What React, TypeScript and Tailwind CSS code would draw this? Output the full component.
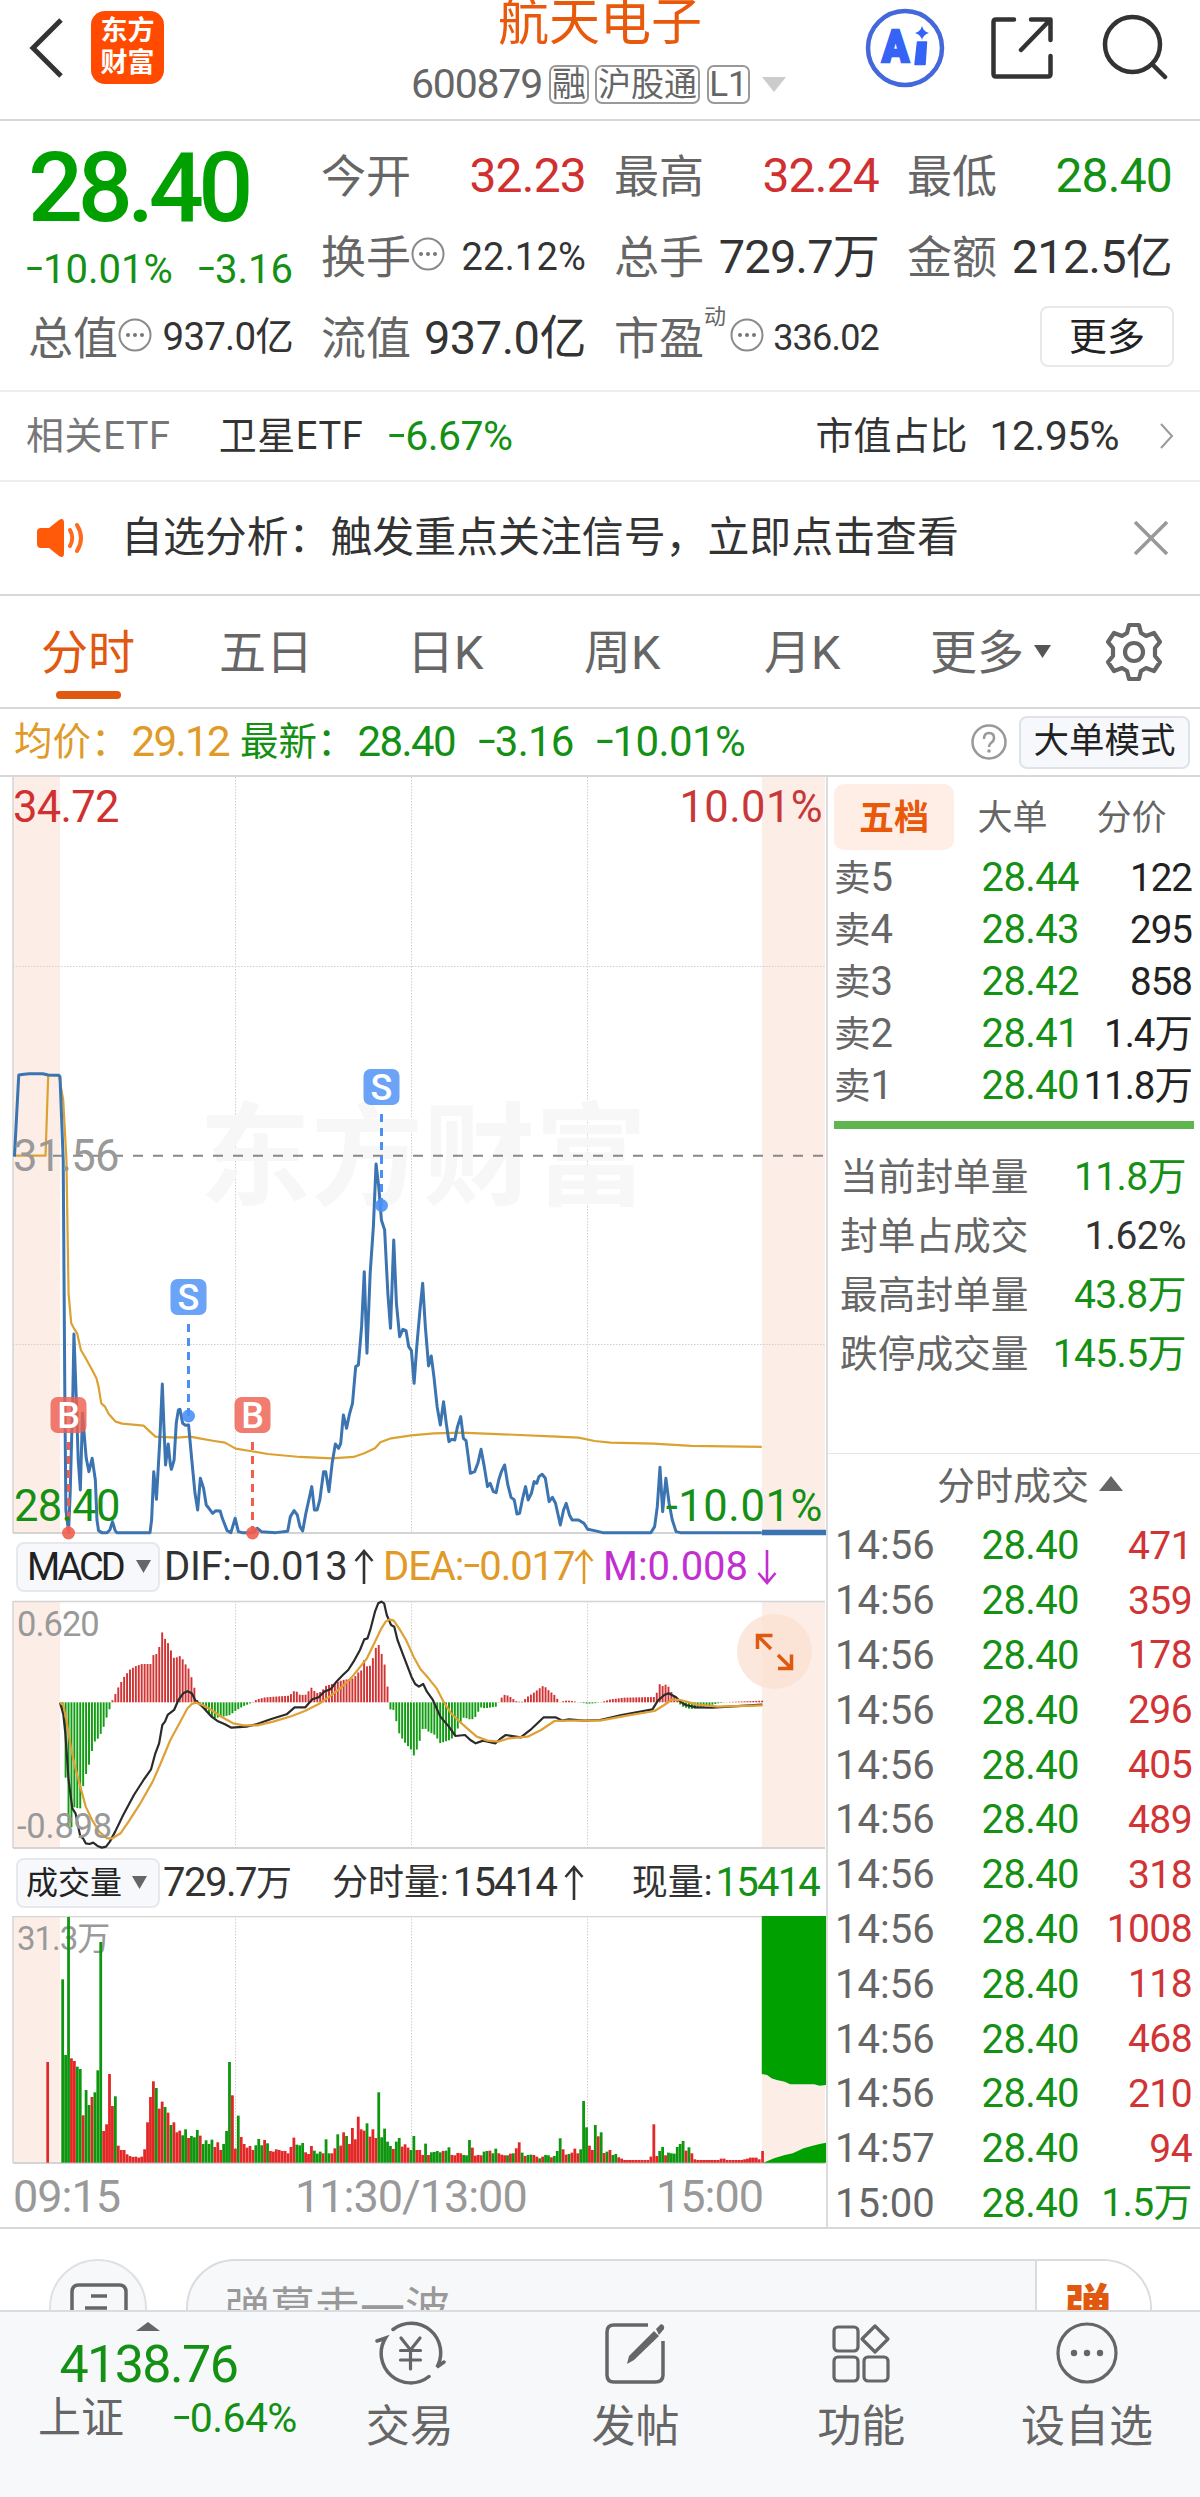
import React from 'react';

const PRICE =
  '27,-10 35,-255 45,-257 55,-259 80,-259 90,-255 110,-254 112,-250 118,0 121,700 123,1050 128,1115 131,1000 136,700 138,522 142,700 146,900 150,990 154,760 158,840 161,895 166,935 172,895 178,960 181,1080 184,1112 190,1118 200,1118 205,1110 210,1085 215,1112 218,1118 280,1118 283,1080 287,935 292,1018 298,850 303,672 306,800 309,915 314,852 318,915 320,928 325,900 329,790 333,750 336,748 341,790 346,796 352,795 358,900 364,1000 369,1050 374,955 380,985 385,1035 390,1045 397,1060 403,1052 411,1053 415,1075 424,1112 431,1118 439,1075 445,1115 452,1118 473,1118 480,1105 488,1115 515,1118 537,1114 542,1070 549,1052 555,1065 560,1100 565,1113 571,1060 582,980 587,1050 592,1050 597,1020 604,935 608,935 614,995 620,910 626,852 632,865 636,850 641,765 647,805 652,765 658,730 664,620 669,615 675,500 680,335 685,580 691,340 697,200 702,12 707,80 712,180 718,210 724,400 729,505 735,240 740,430 746,530 752,508 758,512 763,560 768,572 773,670 778,560 784,450 789,370 794,500 800,618 805,588 810,650 816,740 822,795 828,725 833,790 838,845 843,838 849,840 854,800 860,770 865,835 870,842 874,890 878,940 886,935 892,910 898,868 904,920 910,980 915,970 921,995 926,998 931,960 936,935 942,915 948,975 954,1012 960,1020 965,1062 970,1060 975,1020 981,980 986,1020 992,1000 997,965 1002,970 1006,950 1012,943 1018,955 1025,1025 1031,1012 1037,1030 1046,1095 1052,1050 1057,1030 1063,1065 1068,1080 1080,1080 1090,1090 1097,1108 1110,1112 1125,1118 1215,1118 1222,1100 1227,1040 1232,922 1237,1055 1243,955 1249,1030 1255,1080 1262,1115 1270,1118 1422,1118';

const AVG =
  '27,-13 85,-13 90,-254 110,-254 118,-180 124,0 128,400 133,490 138,505 144,520 151,570 160,595 172,630 180,655 184,680 189,730 196,740 203,762 216,785 228,791 268,797 280,815 290,830 330,833 355,830 375,836 400,843 420,848 440,866 500,882 560,891 620,895 660,891 680,880 700,865 710,847 730,835 768,826 810,820 860,818 940,823 1030,829 1080,833 1110,843 1140,848 1220,851 1290,858 1422,861';

const DIF =
  '112,368 118,400 122,460 128,600 135,685 141,700 146,740 150,770 155,775 160,790 167,792 174,788 182,798 190,803 198,800 205,785 215,755 230,705 250,645 268,600 282,568 290,520 297,490 303,435 308,425 313,405 325,390 333,360 342,340 350,334 358,340 365,362 378,380 395,410 407,424 420,433 432,443 460,440 480,432 505,418 535,403 550,382 570,382 583,358 595,352 605,335 617,328 628,305 640,285 650,270 660,245 672,210 680,178 686,175 692,145 700,95 706,70 712,65 717,70 722,105 730,135 736,140 742,180 755,235 768,290 775,312 782,320 790,312 797,335 808,360 822,410 838,440 850,468 868,465 878,480 888,490 902,482 925,490 935,475 944,465 972,472 990,450 1015,412 1037,412 1050,422 1062,418 1090,422 1120,420 1160,405 1218,388 1228,362 1240,345 1248,340 1262,352 1270,365 1280,375 1300,382 1330,383 1423,374';

const DEA =
  '112,368 118,375 124,420 132,500 140,560 150,620 160,680 172,720 185,755 200,775 210,775 225,760 240,725 262,670 285,605 300,550 318,480 335,430 350,385 358,372 366,368 378,375 395,390 415,412 435,430 455,436 480,436 510,425 545,408 570,392 595,372 615,350 635,325 655,295 670,265 685,235 700,185 712,145 720,125 727,118 735,122 745,145 758,180 772,230 785,268 800,295 815,325 828,365 842,400 858,425 872,445 890,470 910,482 930,485 950,475 985,470 1010,450 1035,423 1060,422 1120,422 1170,407 1222,393 1240,375 1255,358 1270,360 1300,373 1340,380 1423,376';

const HIST =
  '112,367 117,400 123,612 128,740 134,742 139,680 145,685 150,685 155,620 161,580 167,550 172,510 178,480 184,475 190,455 196,430 202,395 207,380 210,360 216,340 222,318 232,290 243,268 254,258 265,252 281,252 287,222 292,222 298,198 303,155 309,180 314,190 320,215 325,235 330,232 336,228 342,240 347,255 353,268 358,295 364,330 369,365 375,370 386,395 397,415 410,412 430,405 440,392 455,378 470,368 480,358 495,352 540,347 551,330 560,345 570,345 582,322 590,340 600,335 608,318 620,312 640,300 660,295 670,275 676,270 681,230 686,265 692,255 697,230 703,195 708,195 713,225 719,260 724,328 728,388 735,390 740,425 746,465 757,490 768,510 773,528 779,505 784,480 790,440 800,455 812,465 822,490 830,485 840,480 848,470 860,425 866,412 880,420 888,410 897,382 905,385 926,380 935,355 943,343 952,350 965,365 975,365 985,350 995,340 1003,330 1015,316 1022,328 1035,345 1045,367 1055,362 1065,362 1080,367 1097,371 1110,370 1123,366 1140,358 1165,353 1222,351 1227,335 1232,310 1238,320 1244,312 1250,325 1256,345 1262,355 1267,370 1275,380 1288,387 1300,386 1320,378 1340,370 1360,366 1390,364 1423,362';

// one bar per minute from 09:30, letter = direction, number = top of the bar
const VOL =
  'g358 g585 g171 r595 r603 g620 g627 r766 g690 g735 r711 g697 g631 g246 r813 r793 r642 r738 g709 r857 r870 r870 r883 r888 r891 r890 r893 r890 r868 r787 r711 r664 g684 r746 r725 g741 r758 g795 r787 r817 r812 g826 g808 r834 g828 g832 g810 r827 g852 g841 g852 g839 r861 r847 r870 g852 g813 g606 r706 r866 g767 r831 r852 r863 r858 r870 g856 g837 g856 r840 g850 r873 r875 r868 r870 r873 r873 r880 r861 r833 g854 g856 g849 r877 r882 r858 g872 g881 g875 r880 g838 g880 r880 r865 g823 r857 r817 g828 r852 r804 r838 r770 r808 r812 g790 r830 r808 r834 g697 g832 g806 g845 g858 r867 g845 g834 r860 r853 r863 g870 g828 r870 r870 r885 g851 r885 g877 g876 g873 g877 r873 g872 g862 r885 r886 r879 r880 g885 g886 g840 r863 r887 r885 r886 g875 g873 r872 g880 g866 r880 r884 r886 g886 r881 g880 r865 r847 g878 r888 g885 g884 r885 r890 g895 r890 g885 g886 r892 g888 g873 g835 r868 r884 g882 r878 r866 r880 g868 g723 g802 r857 r870 g795 r829 g817 r879 g875 r870 g885 g882 r892 r896 r900 r900 r900 r900 r900 r900 r900 r900 r900 r890 r793 r888 g873 g861 r886 g878 g880 g881 g861 g852 g843 r872 g862 r880 r898 r900 r900 r900 r900 r900 r900 r900 r900 r896 r896 r900 r900 r900 r900 r900 r900 r898 r896 r893 r893 r893 r898';

const STEP = 5.463;

const parse = (s: string) => s.split(' ').map(p => p.split(',').map(Number));

const histPts = parse(HIST);
function histAt(x: number) {
  for (let i = 1; i < histPts.length; i++) {
    const [x0, y0] = histPts[i - 1];
    const [x1, y1] = histPts[i];
    if (x <= x1) return y0 + ((y1 - y0) * (x - x0)) / (x1 - x0);
  }
  return 367;
}
const histBars = Array.from({ length: 240 }, (_, i) => {
  const x = 117 + i * STEP;
  return { x, y: histAt(x) };
});

const volBars = VOL.split(' ').map((v, i) => ({
  x: 117 + i * STEP,
  up: v[0] === 'r',
  y: Number(v.slice(1)),
}));

const ASKS = [
  ['卖5', '28.44', '122'],
  ['卖4', '28.43', '295'],
  ['卖3', '28.42', '858'],
  ['卖2', '28.41', '1.4万'],
  ['卖1', '28.40', '11.8万'],
];

const STATS = [
  { label: '当前封单量', value: '11.8万', green: true },
  { label: '封单占成交', value: '1.62%', green: false },
  { label: '最高封单量', value: '43.8万', green: true },
  { label: '跌停成交量', value: '145.5万', green: true },
];

const TRADES = [
  ['14:56', '471'], ['14:56', '359'], ['14:56', '178'], ['14:56', '296'],
  ['14:56', '405'], ['14:56', '489'], ['14:56', '318'], ['14:56', '1008'],
  ['14:56', '118'], ['14:56', '468'], ['14:56', '210'], ['14:57', '94'],
  ['15:00', '1.5万'],
];

// wide minus sign
function Neg() {
  return <span className="inline-block scale-x-150 -translate-y-[2px] mx-[3px]">-</span>;
}

function Dots() {
  return (
    <svg width="34" height="34" viewBox="0 0 34 34" fill="none" className="flex-shrink-0 -mt-[5px]">
      <circle cx="17" cy="17" r="15.5" stroke="#8a8a8a" strokeWidth="2" />
      <circle cx="10" cy="17" r="2" fill="#777" />
      <circle cx="17" cy="17" r="2" fill="#777" />
      <circle cx="24" cy="17" r="2" fill="#777" />
    </svg>
  );
}

function Arrow({ down = false }: { down?: boolean }) {
  return (
    <svg width="20" height="36" viewBox="0 0 20 36" fill="none" stroke="currentColor" strokeWidth="2.6"
      className={down ? 'rotate-180' : ''}>
      <path d="M10 35V2M1.5 12L10 2l8.5 10" />
    </svg>
  );
}

function Header() {
  return (
    <header className="h-[121px] border-b-2 border-[#d8d8d8] flex justify-between overflow-hidden">
      <div className="flex pl-[28px] pt-[11px] w-[400px]">
        <svg width="36" height="74" viewBox="0 0 36 74" fill="none" stroke="#333" strokeWidth="5">
          <path d="M33 9L5 37l28 28" />
        </svg>
        <div className="ml-[27px] w-[73px] h-[73px] rounded-[14px] bg-[#ff4a00] text-white font-bold text-[27px] leading-[32px] text-center pt-[4px]">
          <div>东方</div>
          <div>财富</div>
        </div>
      </div>
      <div className="w-[400px] flex flex-col items-center">
        <div className="text-[51px] leading-[46px] text-[#e8590c]">航天电子</div>
        <div className="mt-[17px] h-[42px] flex items-center text-[#666] leading-none -ml-[3px]">
          <span className="text-[41px] tracking-[-1.2px]">600879</span>
          <span className="ml-[7px] h-[39px] w-[40px] flex items-center justify-center rounded-[7px] border-2 border-[#999] text-[34px]">融</span>
          <span className="ml-[6px] h-[39px] w-[105px] flex items-center justify-center rounded-[7px] border-2 border-[#999] text-[33px]">沪股通</span>
          <span className="ml-[7px] h-[39px] w-[43px] flex items-center justify-center rounded-[7px] border-2 border-[#999] text-[35px]">L1</span>
          <svg width="24" height="15" viewBox="0 0 24 15" className="ml-[12px]"><path d="M0 0h24L12 15z" fill="#ccc" /></svg>
        </div>
      </div>
      <div className="w-[400px] flex justify-end pr-[32px] pt-[8px]">
        <svg width="80" height="80" viewBox="0 0 80 80" className="mr-[45px]">
          <circle cx="40" cy="40" r="37" fill="none" stroke="#4468dc" strokeWidth="4.500" />
          <text x="17" y="54" fontSize="44" fontWeight="900" fill="#3563f5" stroke="#3563f5" strokeWidth="2.500" textLength="27" lengthAdjust="spacingAndGlyphs">A</text>
          <path d="M52.500 34h9L60 56.500h-10z" fill="#3563f5" stroke="#3563f5" strokeWidth="1.500" strokeLinejoin="round" />
          <path d="M57 18q1.500 5.500 7 7-5.500 1.500-7 7-1.500-5.500-7-7 5.500-1.500 7-7z" fill="#3563f5" />
        </svg>
        <svg width="64" height="80" viewBox="0 0 64 80" fill="none" stroke="#333" strokeWidth="4.500" strokeLinejoin="round" strokeLinecap="round" className="mr-[48px]">
          <path d="M24 11.500H6q-2.500 0-2.500 2.500v52q0 2.500 2.500 2.500h52q2.500 0 2.500-2.500V48M41 11.500h19.500V32M60 12L31 42" />
        </svg>
        <svg width="66" height="80" viewBox="0 0 66 80" fill="none" stroke="#333" strokeWidth="4.500" strokeLinecap="round">
          <circle cx="30.500" cy="36.500" r="27.500" />
          <path d="M50 56l13 13" />
        </svg>
      </div>
    </header>
  );
}

function Quote() {
  const cell = 'flex items-center justify-between';
  const label = 'text-[45px] text-[#666] relative top-[2px]';
  return (
    <section className="h-[271px] border-b-2 border-[#eee] px-7 pt-[14px] leading-none text-[#333]">
      <div className="grid grid-cols-4 grid-rows-[81px_81px_81px] gap-x-7">
        <div className="flex items-center pt-[26px] text-[97px] font-medium text-[#00a000] tracking-[-5.5px]">28.40</div>
        <div className={cell}><span className={label}>今开</span><span className="text-[48px] tracking-[-0.8px] text-[#d03030]">32.23</span></div>
        <div className={cell}><span className={label}>最高</span><span className="text-[48px] tracking-[-0.8px] text-[#d03030]">32.24</span></div>
        <div className={cell}><span className={label}>最低</span><span className="text-[48px] tracking-[-0.8px] text-[#149014]">28.40</span></div>

        <div className={`${cell} pt-[26px] text-[40px] text-[#149014]`}><span className="-ml-[2px]"><Neg />10.01%</span><span><Neg />3.16</span></div>
        <div className={cell}>
          <span className="flex items-center"><span className={label}>换手</span><Dots /></span>
          <span className="text-[38px] tracking-[0.2px]">22.12%</span>
        </div>
        <div className={cell}><span className={label}>总手</span><span className="text-[47px] tracking-[-0.8px]">729.7万</span></div>
        <div className={cell}><span className={label}>金额</span><span className="text-[47px] tracking-[-0.8px]">212.5亿</span></div>

        <div className={cell}>
          <span className="flex items-center"><span className={label}>总值</span><Dots /></span>
          <span className="text-[38.5px] tracking-[-0.8px]">937.0亿</span>
        </div>
        <div className={cell}><span className={label}>流值</span><span className="text-[47px] tracking-[-0.5px]">937.0亿</span></div>
        <div className={cell}>
          <span className="flex items-center">
            <span className={label}>市盈</span>
            <span className="text-[22px] text-[#666] self-start -mt-[9px]">动</span>
            <span className="ml-[4px]"><Dots /></span>
          </span>
          <span className="text-[36px] tracking-[-0.8px]">336.02</span>
        </div>
        <div className="flex items-center justify-end">
          <span className="-mr-[2px] -mt-[2px] w-[134px] h-[61px] rounded-[8px] border-2 border-[#e8e8e8] flex items-center justify-center text-[38px] text-[#222]">更多</span>
        </div>
      </div>
    </section>
  );
}

function EtfRow() {
  return (
    <section className="h-[90px] border-b-2 border-[#eee] flex items-center pl-[26px] pr-[26px] leading-none text-[38px] text-[#333]">
      <span className="text-[#777] tracking-[0.6px]">相关ETF</span>
      <span className="ml-[48px] tracking-[0.6px]">卫星ETF</span>
      <span className="ml-[25px] text-[41px] tracking-[-0.5px] text-[#149014]"><Neg />6.67%</span>
      <span className="ml-auto">市值占比</span>
      <span className="ml-[22px] text-[41px] tracking-[-0.6px]">12.95%</span>
      <svg width="14" height="26" viewBox="0 0 14 26" fill="none" stroke="#999" strokeWidth="2" className="ml-[41px]"><path d="M1 1l11 12L1 25" /></svg>
    </section>
  );
}

function Notice() {
  return (
    <section className="h-[114px] border-b-2 border-[#d8d8d8] flex items-center pl-[36px] pr-[32px] leading-none">
      <svg width="50" height="40" viewBox="0 0 50 40">
        <path d="M1 14q0-4 4-4h8L23 2q5-3 5 3v30q0 6-5 3l-10-8H5q-4 0-4-4z" fill="#ff5a0a" />
        <path d="M34 12q4.500 8 0 16M41 7q8 13 0 26" fill="none" stroke="#ff6a20" strokeWidth="4" strokeLinecap="round" />
      </svg>
      <span className="ml-[35px] text-[41.900px] text-[#333]">自选分析：触发重点关注信号，立即点击查看</span>
      <svg width="34" height="34" viewBox="0 0 34 34" stroke="#999" strokeWidth="3.500" className="ml-auto"><path d="M1 1l32 32M33 1L1 33" /></svg>
    </section>
  );
}

function Tabs() {
  return (
    <nav className="h-[113px] border-b-2 border-[#d8d8d8] flex leading-[114px] text-[47px] text-[#666]">
      <div className="ml-[41px] w-[178px] flex flex-col text-[#e0590f]">
        <span className="h-[95px]">分时</span>
        <span className="ml-[15px] w-[65px] h-[8px] rounded-full bg-[#e0590f]"></span>
      </div>
      <span className="w-[188px]">五日</span>
      <span className="w-[177px]">日K</span>
      <span className="w-[180px]">周K</span>
      <span className="w-[166px]">月K</span>
      <span className="w-[104px]">更多</span>
      <svg width="17" height="13" viewBox="0 0 17 13" className="mt-[49px]"><path d="M0 0h17L8.500 13z" fill="#555" /></svg>
      <svg width="60" height="60" viewBox="0 0 60 60" fill="none" stroke="#666" strokeWidth="4.200" strokeLinejoin="round" className="ml-[53px] mt-[26px]">
        <path d="M25 3h10l2 8 5 3 8-3 6 9-5 6v8l5 6-6 9-8-3-5 3-2 8H25l-2-8-5-3-8 3-6-9 5-6v-8l-5-6 6-9 8 3 5-3z" />
        <circle cx="30" cy="30" r="9" />
      </svg>
    </nav>
  );
}

function InfoRow() {
  return (
    <section className="h-[68px] border-b-2 border-[#d8d8d8] flex items-center pl-[14px] pr-[10px] leading-none text-[42px] text-[#149014]">
      <span className="text-[38.5px] text-[#e09a28]">均价：</span>
      <span className="ml-[2px] text-[#e09a28] tracking-[-1.6px]">29.12</span>
      <span className="ml-[11px] text-[38.5px]">最新：</span>
      <span className="ml-[2px] tracking-[-1.6px]">28.40</span>
      <span className="ml-[23px] tracking-[-0.8px]"><Neg />3.16</span>
      <span className="ml-[22px] tracking-[-0.6px]"><Neg />10.01%</span>
      <svg width="36" height="36" viewBox="0 0 36 36" className="ml-auto">
        <circle cx="18" cy="18" r="16.500" fill="none" stroke="#999" strokeWidth="2.500" />
        <path d="M13 15q0-6 5-6t5 5q0 3-3 5-2 1.500-2 4" fill="none" stroke="#999" strokeWidth="2.500" />
        <circle cx="18" cy="27" r="1.800" fill="#999" />
      </svg>
      <span className="ml-[12px] w-[171px] h-[53px] rounded-[8px] border-2 border-[#dfe2e8] bg-[#f7f8fb] flex items-center justify-center text-[35.5px] text-[#222]">大单模式</span>
    </section>
  );
}

interface MarkProps {
  kind: 'S' | 'B';
  x:    number;
  top:  number;
  dot:  number;
}

function Mark({ kind, x, top, dot }: MarkProps) {
  const c = kind === 'S' ? '#4a90f5' : '#ee5f50';
  return (
    <g>
      <path d={`M${x} ${top + 45}V${dot}`} stroke={c} strokeWidth="3" strokeDasharray="8 6" />
      <circle cx={x} cy={dot} r="6.500" fill={c} opacity="0.9" />
      <rect x={x - 18} y={top} width="36" height="36" rx="7" fill={c} opacity="0.82" />
      <text x={x} y={top + 30.5} fontSize="36" fontWeight="500" fill="#fff" textAnchor="middle">{kind}</text>
    </g>
  );
}

function Grid({ top, bottom }: { top: number; bottom: number }) {
  return (
    <g>
      <rect x="13" y={top} width="47" height={bottom - top} fill="#fceee7" />
      <rect x="762" y={top} width="63" height={bottom - top} fill="#fceee7" />
      {[235.5, 411.5, 587.5].map(x => (
        <path key={x} d={`M${x} ${top}V${bottom}`} stroke="#d0d0d0" strokeDasharray="1.5 1.5" />
      ))}
      <path d={`M13 ${top}V${bottom}`} stroke="#d4d4d4" strokeWidth="1.500" />
      <path d={`M13 ${bottom}H825`} stroke="#d4d4d4" strokeWidth="2" />
    </g>
  );
}

function PriceChart() {
  return (
    <svg width="826" height="763" viewBox="0 777 826 763" className="block" fill="none">
      <Grid top={777} bottom={1533} />
      <path d="M13 966.500H825M13 1344.500H825" stroke="#d0d0d0" strokeDasharray="1.5 1.5" />
      <text x="199" y="1197" fontSize="112" fontWeight="700" fill="#f7f7f7">东方财富</text>
      <path d="M53 1155.700H825" stroke="#888" strokeWidth="2" strokeDasharray="10 10" />
      <g transform="translate(0 1160) scale(0.5357 0.3333)" strokeLinejoin="round">
        <polyline points={AVG} stroke="#dba232" strokeWidth="2.200" vectorEffect="non-scaling-stroke" />
        <polyline points={PRICE} stroke="#3b74b0" strokeWidth="3" vectorEffect="non-scaling-stroke" />
      </g>
      <path d="M762 1532.500H826" stroke="#3b74b0" strokeWidth="5.500" />
      <Mark kind="S" x={381.5} top={1069} dot={1205.5} />
      <Mark kind="S" x={188.5} top={1279} dot={1416} />
      <Mark kind="B" x={68.5} top={1397} dot={1533} />
      <Mark kind="B" x={252.5} top={1397} dot={1533} />
      <g fontSize="43.500" letterSpacing="-0.700">
        <text x="13" y="822" fill="#d03030">34.72</text>
        <text x="823" y="822" fill="#c83838" textAnchor="end" letterSpacing="0.400">10.01%</text>
        <text x="13" y="1171" fill="#999">31.56</text>
        <text x="14" y="1521" fill="#149014">28.40</text>
        <text x="823" y="1521" fill="#149014" textAnchor="end" letterSpacing="0.600">-10.01%</text>
      </g>
    </svg>
  );
}

function MacdRow() {
  return (
    <div className="h-[53px] flex items-center pl-[16px] leading-none text-[40px] text-[#333]">
      <span className="w-[144px] h-[50px] rounded-[8px] border-2 border-[#e6e8ec] bg-[#f7f8fb] flex items-center pl-[9px] gap-[13px] text-[38px] tracking-[-3px] text-[#222]">
        MACD
        <svg width="15" height="13" viewBox="0 0 15 13"><path d="M0 0h15L7.500 13z" fill="#666" /></svg>
      </span>
      <span className="ml-[4px] w-[190px] tracking-[-0.3px]">DIF:<Neg />0.013</span>
      <Arrow />
      <span className="ml-[9px] w-[191px] tracking-[-1.1px] text-[#e09a28]">DEA:<Neg />0.017</span>
      <span className="text-[#e09a28]"><Arrow /></span>
      <span className="ml-[9px] w-[154px] text-[#c22fd0]">M:0.008</span>
      <span className="text-[#c22fd0]"><Arrow down /></span>
    </div>
  );
}

function MacdChart() {
  return (
    <svg width="826" height="256" viewBox="0 1593 826 256" className="block" fill="none">
      <Grid top={1601} bottom={1848} />
      <path d="M13 1601.500H825" stroke="#d4d4d4" strokeWidth="1.500" />
      <g transform="translate(0 1580) scale(0.5357 0.3333)" strokeLinejoin="round">
        {histBars.map(b => (
          <rect key={b.x} x={b.x - 1.8} y={Math.min(b.y, 367)} width="3.6" height={Math.abs(b.y - 367)}
            fill={b.y < 367 ? '#d03434' : '#119c11'} />
        ))}
        <polyline points={DIF} stroke="#2b2b2b" strokeWidth="2.200" vectorEffect="non-scaling-stroke" />
        <polyline points={DEA} stroke="#dfa035" strokeWidth="2.200" vectorEffect="non-scaling-stroke" />
      </g>
      <circle cx="774.500" cy="1651.500" r="37.500" fill="#fbdfd0" opacity="0.75" />
      <path d="M757.500 1649V1635.500h15M758 1636l13 13M778 1668.500h13.500v-14M791 1668l-13-13" stroke="#e0590f" strokeWidth="3.500" />
      <g fontSize="34.500" fill="#999" letterSpacing="-1">
        <text x="17" y="1636">0.620</text>
        <text x="17" y="1838" letterSpacing="-0.200">-0.898</text>
      </g>
    </svg>
  );
}

function VolRow() {
  return (
    <div className="h-[67px] flex items-center pl-[16px] leading-none text-[40px] text-[#333]">
      <span className="w-[144px] h-[50px] rounded-[8px] border-2 border-[#e6e8ec] bg-[#f7f8fb] flex items-center pl-[8px] gap-[10px] text-[32px] text-[#222]">
        成交量
        <svg width="15" height="13" viewBox="0 0 15 13"><path d="M0 0h15L7.500 13z" fill="#666" /></svg>
      </span>
      <span className="ml-[3px] w-[169px] tracking-[-1.5px]"><span>729.7</span><span className="text-[36px]">万</span></span>
      <span className="text-[36px]">分时量:</span>
      <span className="ml-[4px] w-[111px] tracking-[-1.8px]">15414</span>
      <Arrow />
      <span className="ml-auto text-[36px]">现量:</span>
      <span className="ml-[3px] mr-[7px] tracking-[-1.8px] text-[#149014]">15414</span>
    </div>
  );
}

function VolChart() {
  return (
    <svg width="826" height="249" viewBox="0 1916 826 249" className="block" fill="none">
      <Grid top={1916} bottom={2163} />
      <path d="M13 1916.500H825" stroke="#d4d4d4" strokeWidth="1.500" />
      <text x="17" y="1950" fontSize="33" fill="#999" letterSpacing="-1">31.3万</text>
      <g transform="translate(0 1860) scale(0.5357 0.3333)">
        <rect x="86.500" y="606" width="5" height="302" fill="#e02828" />
        {volBars.map(b => (
          <rect key={b.x} x={b.x - 2.6} y={b.y} width="5.2" height={908 - b.y} fill={b.up ? '#e32626' : '#0f960f'} />
        ))}
        <rect x="1421" y="873" width="5" height="35" fill="#e02828" />
        <path d="M1422 168H1542V675L1530 677 1520 673H1475L1465 665 1450 660 1440 655 1432 645 1422 642z" fill="#00a000" />
        <path d="M1425 908L1445 895 1465 885 1480 880 1500 865 1515 858 1530 852 1542 848V908z" fill="#00a000" />
      </g>
    </svg>
  );
}

function OrderBook() {
  return (
    <aside className="w-[374px] border-l-2 border-[#dcdcdc] leading-none text-[#222]">
      <div className="h-[677px] border-b border-[#e4e4e4]">
        <div className="flex pl-[6px] pt-[7px] text-[35px] text-[#666]">
          <span className="w-[120px] h-[66px] rounded-[10px] bg-[#ffeee6] flex items-center justify-center font-bold text-[#e8590c] pt-[3px]">五档</span>
          <span className="w-[117px] h-[66px] flex items-center justify-center pt-[3px]">大单</span>
          <span className="w-[121px] h-[66px] flex items-center justify-center pt-[3px]">分价</span>
        </div>
        {ASKS.map(([name, price, qty]) => (
          <div key={name} className="h-[52px] pt-[4px] flex items-center pl-[6px] pr-[8px]">
            <span className="w-[90px] text-[#666] text-[40px]"><span className="text-[36.500px]">{name[0]}</span>{name[1]}</span>
            <span className="w-[155px] text-right text-[40px] text-[#149014] tracking-[-0.6px]">{price}</span>
            <span className={`flex-1 text-right tracking-[-1px] ${qty.length > 5 ? 'text-[35.5px]' : 'text-[38.5px]'}`}>{qty}</span>
          </div>
        ))}
        <div className="ml-[6px] mr-[6px] mt-[11px] h-[8px] bg-[#60b64e]"></div>
        <div className="pt-[17px]">
          {STATS.map(s => (
            <div key={s.label} className="h-[59px] pt-[4px] flex items-center justify-between pl-[12px] pr-[14px]">
              <span className="text-[37.700px] text-[#666]">{s.label}</span>
              <span className={`text-[39px] tracking-[-0.6px] ${s.green ? 'text-[#149014]' : 'text-[#333]'}`}>{s.value}</span>
            </div>
          ))}
        </div>
      </div>
      <div className="h-[63px] flex items-center justify-center text-[38px] text-[#666] pl-[32px]">
        分时成交
        <svg width="24" height="15" viewBox="0 0 24 15" className="ml-[10px] -mt-[4px]"><path d="M0 15h24L12 0z" fill="#666" /></svg>
      </div>
      {TRADES.map(([time, qty], i) => (
        <div key={i} className="h-[54.800px] pt-[4px] flex items-center pl-[7px] pr-[8px] text-[40px]">
          <span className="w-[110px] text-[#666]">{time}</span>
          <span className="w-[134px] text-right text-[#149014] tracking-[-0.6px]">28.40</span>
          <span className={`flex-1 text-right tracking-[-0.6px] text-[39px] ${i === 12 ? 'text-[#149014]' : 'text-[#d03434]'}`}>{qty}</span>
        </div>
      ))}
    </aside>
  );
}

function Danmu() {
  return (
    <section className="h-[81px] overflow-hidden flex pt-[30px] pl-[49px] leading-none">
      <div className="w-[98px] h-[98px] rounded-full border-2 border-[#dfe1e5] bg-[#f7f8fa] flex-shrink-0 pt-[22px] pl-[19px]">
        <svg width="58" height="56" viewBox="0 0 58 56" fill="none" stroke="#666" strokeWidth="3.500">
          <path d="M2 56V9q0-7 7-7h40q7 0 7 7v47M21 13h16M15 25h22" />
        </svg>
      </div>
      <div className="ml-[39px] w-[966px] h-[98px] rounded-full border-2 border-[#dadcdf] bg-[#f7f8fa] overflow-hidden flex flex-shrink-0">
        <span className="w-[847px] pl-[37px] pt-[26px] text-[45px] text-[#999]">弹幕走一波</span>
        <span className="flex-1 border-l-2 border-[#dadcdf] bg-white pl-[28px] pt-[22px] text-[46px] font-black text-[#e0590f]">弹</span>
      </div>
    </section>
  );
}

function BottomBar() {
  const item = 'flex flex-col items-center w-[226px] pt-[9px]';
  const text = 'mt-[18px] text-[44px] text-[#666]';
  return (
    <footer className="h-[187px] border-t-2 border-[#dadcdf] bg-[#f7f8fa] flex leading-none">
      <div className="w-[297px] flex flex-col items-center pt-[10px]">
        <svg width="24" height="9" viewBox="0 0 24 9"><path d="M0 9h24L12 0z" fill="#666" /></svg>
        <div className="mt-[8px] text-[52px] tracking-[-1.6px] text-[#149014]">4138.76</div>
        <div className="mt-[6px] pl-[38px] w-full flex items-center justify-between">
          <span className="text-[43px] text-[#666]">上证</span>
          <span className="text-[41px] tracking-[-0.6px] text-[#149014]"><Neg />0.64%</span>
        </div>
      </div>
      <div className={item}>
        <svg width="72" height="66" viewBox="0 0 72 66" fill="none" stroke="#666" strokeWidth="3.500" strokeLinecap="round">
          <path d="M19 8.500A29.500 29.500 0 0 1 63 46l7-5M55 55.500A29.500 29.500 0 0 1 11.500 17L3 20" />
          <path d="M27 17l9.500 12 9.500-12M36.500 29v19M26.500 29.500h20M26.500 39h20" strokeWidth="3.200" />
        </svg>
        <span className={text}>交易</span>
      </div>
      <div className={item}>
        <svg width="62" height="66" viewBox="0 0 62 66" fill="none" stroke="#666" strokeWidth="3.500">
          <path d="M44 4H10q-7 0-7 7v43q0 7 7 7h41q8 0 8-7V20" />
          <path d="M23 43l2-8L50 10l5 5-25 24z" fill="#666" stroke="none" />
          <path d="M52 8l5-5q4 1 3 5l-5 6z" fill="#666" stroke="none" />
        </svg>
        <span className={text}>发帖</span>
      </div>
      <div className={item}>
        <svg width="60" height="66" viewBox="0 0 60 66" fill="none" stroke="#666" strokeWidth="3.200">
          <rect x="3" y="6" width="24" height="24" rx="4" />
          <rect x="3" y="36" width="24" height="24" rx="4" />
          <rect x="33" y="36" width="24" height="24" rx="4" />
          <path d="M44 5L57 18 44 31 31 18z" strokeLinejoin="round" />
        </svg>
        <span className={text}>功能</span>
      </div>
      <div className={item}>
        <svg width="64" height="66" viewBox="0 0 64 66" fill="none">
          <circle cx="32" cy="32" r="29" stroke="#666" strokeWidth="3.200" />
          <circle cx="19" cy="32" r="3.200" fill="#666" />
          <circle cx="32" cy="32" r="3.200" fill="#666" />
          <circle cx="45" cy="32" r="3.200" fill="#666" />
        </svg>
        <span className={text}>设自选</span>
      </div>
    </footer>
  );
}

export default function App() {
  return (
    <div className="w-[1200px] h-[2497px] bg-white overflow-hidden flex flex-col whitespace-nowrap font-[Roboto,'Noto_Sans_CJK_SC',sans-serif]">
      <Header />
      <Quote />
      <EtfRow />
      <Notice />
      <Tabs />
      <InfoRow />
      <main className="h-[1452px] border-b-2 border-[#d8d8d8] flex flex-shrink-0">
        <div className="w-[826px]">
          <PriceChart />
          <MacdRow />
          <MacdChart />
          <VolRow />
          <VolChart />
          <div className="h-[62px] flex items-center pl-[13px] leading-none text-[45px] text-[#999] tracking-[-1px]">
            <span className="w-[282px]">09:15</span>
            <span className="w-[361px]">11:30/13:00</span>
            <span>15:00</span>
          </div>
        </div>
        <OrderBook />
      </main>
      <Danmu />
      <BottomBar />
    </div>
  );
}
